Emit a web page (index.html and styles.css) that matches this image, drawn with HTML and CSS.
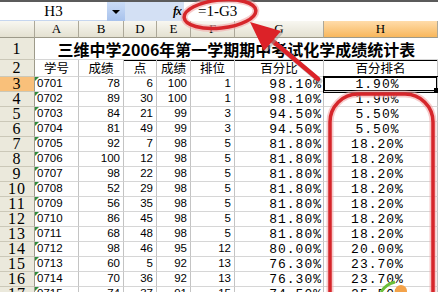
FILE: index.html
```html
<!DOCTYPE html>
<html lang="zh-CN">
<head>
<meta charset="utf-8">
<title>成绩统计表</title>
<link rel="stylesheet" href="styles.css">
</head>
<body>
<div class="app">
  <div class="fbar">
    <div class="name-box">H3</div>
    <div class="name-drop"><span class="tri"></span></div>
    <div class="fx-area"><span class="fx">fx</span></div>
    <div class="formula">=1-G3</div>
  </div>
  <div class="sheet">
    <div class="ch"></div><div class="ch">A</div><div class="ch">B</div><div class="ch">D</div><div class="ch">E</div><div class="ch">F</div><div class="ch">G</div><div class="ch sel">H</div>

    <div class="rh">1</div><div class="c title">三维中学2006年第一学期期中考试化学成绩统计表</div>

    <div class="rh">2</div><div class="c hd">学号</div><div class="c hd">成绩</div><div class="c hd bt">点</div><div class="c hd bt">成绩</div><div class="c hd bt">排位</div><div class="c hd bt">百分比</div><div class="c hd bt">百分排名</div>

    <div class="rh sel">3</div><div class="c tx">0701</div><div class="c nr">78</div><div class="c nr">6</div><div class="c nr">100</div><div class="c nr">1</div><div class="c pg">98.10%</div><div class="c ph active">1.90%</div>
    <div class="rh">4</div><div class="c tx">0702</div><div class="c nr">89</div><div class="c nr">30</div><div class="c nr">100</div><div class="c nr">1</div><div class="c pg">98.10%</div><div class="c ph">1.90%</div>
    <div class="rh">5</div><div class="c tx">0703</div><div class="c nr">84</div><div class="c nr">21</div><div class="c nr">99</div><div class="c nr">3</div><div class="c pg">94.50%</div><div class="c ph">5.50%</div>
    <div class="rh">6</div><div class="c tx">0704</div><div class="c nr">81</div><div class="c nr">49</div><div class="c nr">99</div><div class="c nr">3</div><div class="c pg">94.50%</div><div class="c ph">5.50%</div>
    <div class="rh">7</div><div class="c tx">0705</div><div class="c nr">92</div><div class="c nr">7</div><div class="c nr">98</div><div class="c nr">5</div><div class="c pg">81.80%</div><div class="c ph">18.20%</div>
    <div class="rh">8</div><div class="c tx">0706</div><div class="c nr">100</div><div class="c nr">12</div><div class="c nr">98</div><div class="c nr">5</div><div class="c pg">81.80%</div><div class="c ph">18.20%</div>
    <div class="rh">9</div><div class="c tx">0707</div><div class="c nr">98</div><div class="c nr">22</div><div class="c nr">98</div><div class="c nr">5</div><div class="c pg">81.80%</div><div class="c ph">18.20%</div>
    <div class="rh">10</div><div class="c tx">0708</div><div class="c nr">52</div><div class="c nr">29</div><div class="c nr">98</div><div class="c nr">5</div><div class="c pg">81.80%</div><div class="c ph">18.20%</div>
    <div class="rh">11</div><div class="c tx">0709</div><div class="c nr">56</div><div class="c nr">35</div><div class="c nr">98</div><div class="c nr">5</div><div class="c pg">81.80%</div><div class="c ph">18.20%</div>
    <div class="rh">12</div><div class="c tx">0710</div><div class="c nr">86</div><div class="c nr">45</div><div class="c nr">98</div><div class="c nr">5</div><div class="c pg">81.80%</div><div class="c ph">18.20%</div>
    <div class="rh">13</div><div class="c tx">0711</div><div class="c nr">68</div><div class="c nr">48</div><div class="c nr">98</div><div class="c nr">5</div><div class="c pg">81.80%</div><div class="c ph">18.20%</div>
    <div class="rh">14</div><div class="c tx">0712</div><div class="c nr">98</div><div class="c nr">46</div><div class="c nr">95</div><div class="c nr">12</div><div class="c pg">80.00%</div><div class="c ph">20.00%</div>
    <div class="rh">15</div><div class="c tx">0713</div><div class="c nr">60</div><div class="c nr">5</div><div class="c nr">92</div><div class="c nr">13</div><div class="c pg">76.30%</div><div class="c ph">23.70%</div>
    <div class="rh">16</div><div class="c tx">0714</div><div class="c nr">70</div><div class="c nr">36</div><div class="c nr">92</div><div class="c nr">13</div><div class="c pg">76.30%</div><div class="c ph">23.70%</div>
    <div class="rh">17</div><div class="c tx">0715</div><div class="c nr">74</div><div class="c nr">37</div><div class="c nr">91</div><div class="c nr">15</div><div class="c pg">74.50%</div><div class="c ph">25.50%</div>
  </div>
  <svg class="annot" width="438" height="292" viewBox="0 0 438 292">
    <g fill="none" stroke-linecap="round">
      <ellipse cx="220" cy="14" rx="36" ry="14" transform="rotate(-6 220 14)" stroke="#f2a8a8" stroke-width="7" opacity="0.6"/>
      <ellipse cx="220" cy="14" rx="36" ry="14" transform="rotate(-6 220 14)" stroke="#d6262b" stroke-width="3.5"/>
      <rect x="330" y="94" width="103" height="240" rx="28" stroke="#f2a8a8" stroke-width="7" opacity="0.6"/>
      <rect x="330" y="94" width="103" height="240" rx="28" stroke="#d6262b" stroke-width="3.5"/>
      <line x1="320" y1="81" x2="270" y2="39" stroke="#9a9a9a" stroke-width="5" opacity="0.5"/>
      <line x1="318" y1="79" x2="268" y2="37" stroke="#dc2228" stroke-width="4.5"/>
    </g>
    <polygon points="252,24 283,33 266,53" fill="#9a9a9a" opacity="0.5"/>
    <polygon points="250,22 281,31 264,51" fill="#dc2228"/>
    <path d="M381 292 Q386 284 395 282" fill="none" stroke="#6cbf3a" stroke-width="3"/>
    <circle cx="401" cy="291" r="6" fill="#f3a34a"/>
  </svg>
</div>
</body>
</html>
```
FILE: styles.css
```css
* { box-sizing: border-box; }
html, body { margin: 0; padding: 0; }
body {
  width: 438px;
  height: 292px;
  overflow: hidden;
  background: #fff;
  font-family: "Liberation Sans", Arial, sans-serif;
  color: #000;
}
.app {
  position: relative;
  width: 438px;
  height: 292px;
  overflow: hidden;
}
.fbar {
  display: flex;
  height: 21px;
  border-top: 2px solid #5b5b5b;
  background: #d3e0f4;
}
.name-box {
  width: 107px;
  background: #fff;
  font: 15px "Liberation Serif", serif;
  line-height: 19px;
  text-align: center;
  border-bottom: 1px solid #c6d6ef;
}
.name-drop {
  width: 18px;
  background: linear-gradient(#cadcf7, #a8c2ec);
  display: flex;
  align-items: center;
  justify-content: center;
}
.tri {
  width: 0;
  height: 0;
  border-left: 4px solid transparent;
  border-right: 4px solid transparent;
  border-top: 4px solid #000;
}
.fx-area {
  width: 59px;
  display: flex;
  align-items: center;
  justify-content: flex-end;
  padding-right: 3px;
  background: #d3e0f4;
}
.fx {
  font: italic bold 12px "Liberation Serif", serif;
  letter-spacing: -1px;
}
.formula {
  flex: 1;
  background: #fff;
  font: 15px "Liberation Serif", serif;
  line-height: 19px;
  padding-left: 14px;
}
.sheet {
  display: grid;
  grid-template-columns: 35px 44px 45px 33px 34px 44px 89px 114px;
  grid-template-rows: 17px 22px 17px repeat(15, 15px);
}
.ch {
  background: linear-gradient(#f8f7f1, #e4e1d1);
  border-right: 1px solid #aca899;
  border-bottom: 1px solid #9d9a8a;
  font: 13px "Liberation Serif", serif;
  display: flex;
  align-items: center;
  justify-content: center;
}
.ch.sel {
  background: linear-gradient(#ffdcaa, #f8b75c);
}
.rh {
  background: #ebe9dc;
  border-right: 1px solid #9d9a8a;
  border-bottom: 1px solid #cbc8b8;
  font: 16px "Liberation Serif", serif;
  letter-spacing: 1px;
  display: flex;
  align-items: center;
  justify-content: center;
  line-height: 1;
}
.rh.sel {
  background: #f9c07a;
}
.c {
  border-right: 1px solid #c4c4c4;
  border-bottom: 1px solid #d6d6d6;
  display: flex;
  align-items: center;
  font-size: 11.5px;
  line-height: 1;
  white-space: nowrap;
  padding: 0 2px;
}
.title {
  grid-column: span 7;
  border-right: none;
  justify-content: center;
  font: bold 16px "Noto Sans CJK SC", sans-serif;
  line-height: 1;
  padding-left: 2px;
}
.hd {
  justify-content: center;
  font: 12.5px "Noto Sans CJK SC", sans-serif;
  line-height: 1;
}
.bt {
  box-shadow: inset 0 1px 0 #000;
}
.tx {
  position: relative;
  padding-left: 2px;
}
.tx::before {
  content: "";
  position: absolute;
  top: 0;
  left: 0;
  border-top: 4px solid #2e8b3a;
  border-right: 4px solid transparent;
}
.nr {
  justify-content: flex-end;
  padding-right: 3px;
}
.pg {
  justify-content: flex-end;
  padding-right: 1px;
  font: 13px "Liberation Mono", monospace;
  letter-spacing: 1px;
  line-height: 1;
}
.ph {
  justify-content: center;
  padding-right: 8px;
  font: 13px "Liberation Mono", monospace;
  letter-spacing: 1px;
  line-height: 1;
}
.active {
  position: relative;
  z-index: 1;
  box-shadow: 0 0 0 1px #000, inset 0 0 0 1px #000;
}
.active::after {
  content: "";
  position: absolute;
  right: -2px;
  bottom: -2px;
  width: 5px;
  height: 5px;
  background: #000;
}
.annot {
  position: absolute;
  top: 0;
  left: 0;
  z-index: 5;
  pointer-events: none;
}
```
